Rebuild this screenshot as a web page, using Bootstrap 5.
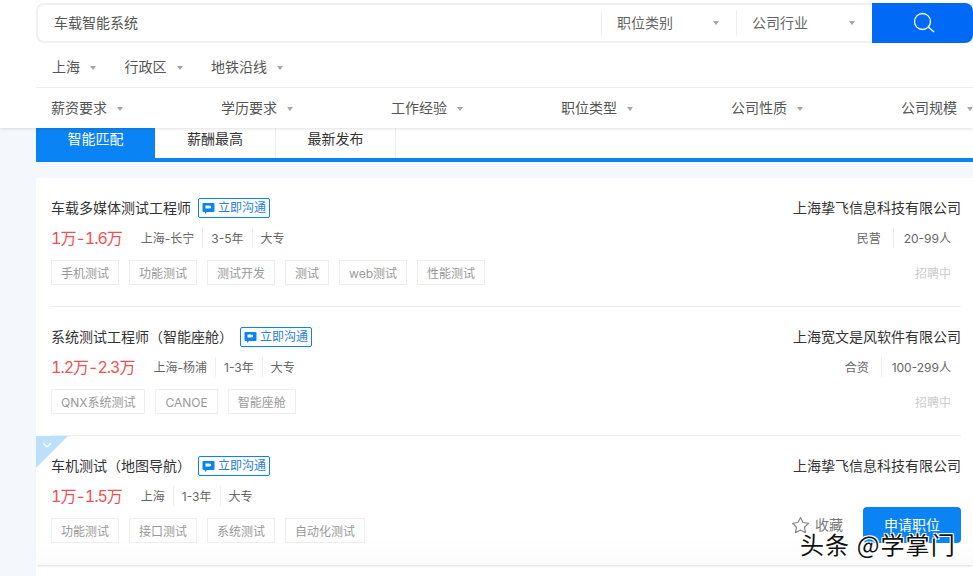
<!DOCTYPE html>
<html lang="zh">
<head>
<meta charset="utf-8">
<title>职位搜索</title>
<link href="https://cdn.jsdelivr.net/npm/bootstrap@5.3.3/dist/css/bootstrap.min.css" rel="stylesheet">
<style>
html, body { height: 576px; overflow: hidden; }
body { background: #f4f7fb; font-family: Inter, "Noto Sans CJK SC", "Liberation Sans", sans-serif; font-size: 14px; color: #333; position: relative; }
.top-head { height: 128px; background: #fff; padding-top: 3px; padding-left: 36px; box-shadow: 0 1px 3px rgba(0,0,0,.12); position: relative; z-index: 2; overflow: hidden; }
.search-box { height: 40px; border: 2px solid #f0f0f0; border-right: 0; border-radius: 8px; color: #555; }
.search-txt { padding-left: 16px; margin-top: -2px; }
.search-sel { width: 135px; height: 26px; padding: 0 17px 0 15px; border-left: 1px solid #f0f0f0; color: #666; }
.search-sel + .search-sel { width: 136px; }
.search-sel span { margin-top: -2px; }
.search-btn { width: 101px; height: 40px; margin: -2px 0; background: #0069f5; border: 0; border-radius: 0 8px 8px 0; }
.tri { display: inline-block; width: 0; height: 0; border: 3px solid transparent; border-top: 4px solid #a5a5a5; border-bottom: 0; vertical-align: middle; }
.area-row { height: 44px; padding: 2px 0 0 16px; gap: 28.5px; color: #555; }
.area-row .tri { margin-left: 10px; }
.cond-row { height: 41px; border-top: 1px solid #eee; padding: 0 0 2px 15px; color: #555; }
.cond-item { width: 170px; flex: none; }
.cond-item .tri { margin-left: 10px; }
.sort-bar { height: 34px; margin-left: 36px; background: #fff; border-bottom: 4px solid #0a84f5; }
.sort-tab { width: 120px; border-right: 1px solid #eee; text-align: center; line-height: 21px; color: #333; }
.sort-tab.on { width: 119px; background: #0a84f5; color: #fff; border-right: 0; }
.sort-tab.on + .sort-tab { width: 121px; }
.job-list { margin: 16px 0 0 36px; background: #fff; height: 400px; }
.job-row { height: 129px; padding: 20px 12px 0 15px; position: relative; }
.job-line { position: absolute; left: 15px; right: 12px; bottom: 0; border-bottom: 1px solid #eee; }
.job-row.hov { background: linear-gradient(#fff 80%, #fbfbfb); box-shadow: 0 2px 2px -1px rgba(0,0,0,.14); }
.job-name { height: 20px; line-height: 20px; }
.chat-tag { margin-left: 7px; width: 72px; height: 20px; border: 1px solid #0a84f5; border-radius: 2px; color: #2a80d8; font-size: 12px; gap: 3px; }
.job-meta { height: 20px; margin-top: 10px; font-size: 12px; color: #666; }
.pay { font-size: 16px; color: #ef4f53; margin-right: 11px; font-feature-settings: "tnum"; letter-spacing: -1px; }
.meta-cell { padding: 0 8px; height: 20px; line-height: 22px; border-right: 1px solid #eee; }
.meta-cell:last-child { border-right: 0; }
.skill-row { margin-top: 12px; gap: 10px; }
.skill { height: 25px; padding: 0 9px; border: 1px solid #eee; font-size: 12px; line-height: 25px; color: #999; }
.com-name { height: 20px; line-height: 20px; color: #333; }
.com-meta { height: 20px; margin-top: 10px; font-size: 12px; color: #666; padding-right: 2px; }
.com-meta .meta-cell { padding: 0 12px 0 10px; }
.com-meta .meta-cell:last-child { padding-right: 8px; }
.hire-state { margin-top: 16px; padding-right: 10px; font-size: 12px; line-height: 20px; color: #ccc; }
.job-act { margin-top: 31px; }
.save-lnk { font-size: 14px; color: #777; margin-right: 20px; gap: 5px; }
.save-lnk span { margin-top: -2px; }
.apply-btn { width: 98px; height: 36px; background: #0a84f5; color: #fff; font-size: 14px; border: 0; border-radius: 4px; padding: 0 0 2px; }
.corner-mark { position: absolute; left: 0; top: 0; }
.water-mark { position: absolute; left: 800px; top: 528px; font-family: "Noto Sans CJK SC", sans-serif; font-size: 24px; line-height: 32px; color: #111; letter-spacing: 1.1px; text-shadow: 1px 1px 0 #fff, -1px -1px 0 #fff, 1px -1px 0 #fff, -1px 1px 0 #fff; z-index: 3; white-space: nowrap; }
</style>
</head>
<body>

<header class="top-head">
  <div class="search-box d-flex align-items-center">
    <div class="search-txt flex-grow-1">车载智能系统</div>
    <div class="search-sel d-flex align-items-center justify-content-between"><span>职位类别</span><i class="tri"></i></div>
    <div class="search-sel d-flex align-items-center justify-content-between"><span>公司行业</span><i class="tri"></i></div>
    <button class="search-btn d-flex align-items-center justify-content-center" type="button" aria-label="搜索">
      <svg width="24" height="24" viewBox="0 0 24 24" fill="none" stroke="#fff" stroke-width="1.3"><circle cx="11.5" cy="10.5" r="8"/><path d="M17.3 16l5.700 5"/></svg>
    </button>
  </div>
  <div class="area-row d-flex align-items-center">
    <div>上海<i class="tri"></i></div>
    <div>行政区<i class="tri"></i></div>
    <div>地铁沿线<i class="tri"></i></div>
  </div>
  <div class="cond-row d-flex align-items-center">
    <div class="cond-item">薪资要求<i class="tri"></i></div>
    <div class="cond-item">学历要求<i class="tri"></i></div>
    <div class="cond-item">工作经验<i class="tri"></i></div>
    <div class="cond-item">职位类型<i class="tri"></i></div>
    <div class="cond-item">公司性质<i class="tri"></i></div>
    <div class="cond-item">公司规模<i class="tri"></i></div>
  </div>
</header>

<div class="sort-bar d-flex">
  <div class="sort-tab on">智能匹配</div>
  <div class="sort-tab">薪酬最高</div>
  <div class="sort-tab">最新发布</div>
</div>

<div class="job-list">

  <div class="job-row d-flex justify-content-between">
    <div>
      <div class="job-name d-flex">车载多媒体测试工程师
        <span class="chat-tag d-flex align-items-center justify-content-center">
          <svg width="13" height="12" viewBox="0 0 13 12"><path fill="#0a84f5" d="M1.500 1h10a1 1 0 0 1 1 1v7a1 1 0 0 1-1 1H5l-2 2v-2H1.500a1 1 0 0 1-1-1V2a1 1 0 0 1 1-1z"/><path fill="#fff" d="M3.500 3.500h4v1l1.500-1v3l-1.500-1v1h-4z"/></svg>立即沟通</span>
      </div>
      <div class="job-meta d-flex align-items-center">
        <span class="pay">1万-1.6万</span>
        <span class="meta-cell">上海-长宁</span><span class="meta-cell">3-5年</span><span class="meta-cell">大专</span>
      </div>
      <div class="skill-row d-flex">
        <span class="skill">手机测试</span><span class="skill">功能测试</span><span class="skill">测试开发</span><span class="skill">测试</span><span class="skill">web测试</span><span class="skill">性能测试</span>
      </div>
    </div>
    <div class="d-flex flex-column align-items-end">
      <div class="com-name">上海挚飞信息科技有限公司</div>
      <div class="com-meta d-flex"><span class="meta-cell">民营</span><span class="meta-cell">20-99人</span></div>
      <div class="hire-state">招聘中</div>
    </div>
    <div class="job-line"></div>
  </div>

  <div class="job-row d-flex justify-content-between">
    <div>
      <div class="job-name d-flex">系统测试工程师（智能座舱）
        <span class="chat-tag d-flex align-items-center justify-content-center">
          <svg width="13" height="12" viewBox="0 0 13 12"><path fill="#0a84f5" d="M1.500 1h10a1 1 0 0 1 1 1v7a1 1 0 0 1-1 1H5l-2 2v-2H1.500a1 1 0 0 1-1-1V2a1 1 0 0 1 1-1z"/><path fill="#fff" d="M3.500 3.500h4v1l1.500-1v3l-1.500-1v1h-4z"/></svg>立即沟通</span>
      </div>
      <div class="job-meta d-flex align-items-center">
        <span class="pay">1.2万-2.3万</span>
        <span class="meta-cell">上海-杨浦</span><span class="meta-cell">1-3年</span><span class="meta-cell">大专</span>
      </div>
      <div class="skill-row d-flex">
        <span class="skill">QNX系统测试</span><span class="skill">CANOE</span><span class="skill">智能座舱</span>
      </div>
    </div>
    <div class="d-flex flex-column align-items-end">
      <div class="com-name">上海宽文是风软件有限公司</div>
      <div class="com-meta d-flex"><span class="meta-cell">合资</span><span class="meta-cell">100-299人</span></div>
      <div class="hire-state">招聘中</div>
    </div>
    <div class="job-line"></div>
  </div>

  <div class="job-row hov d-flex justify-content-between">
    <svg class="corner-mark" width="32" height="32" viewBox="0 0 32 32"><path fill="#bcdffb" d="M0 0h32L0 32z"/><path fill="none" stroke="#fff" stroke-width="1.2" d="M7 7l4 4 4-4"/></svg>
    <div>
      <div class="job-name d-flex">车机测试（地图导航）
        <span class="chat-tag d-flex align-items-center justify-content-center">
          <svg width="13" height="12" viewBox="0 0 13 12"><path fill="#0a84f5" d="M1.500 1h10a1 1 0 0 1 1 1v7a1 1 0 0 1-1 1H5l-2 2v-2H1.500a1 1 0 0 1-1-1V2a1 1 0 0 1 1-1z"/><path fill="#fff" d="M3.500 3.500h4v1l1.500-1v3l-1.500-1v1h-4z"/></svg>立即沟通</span>
      </div>
      <div class="job-meta d-flex align-items-center">
        <span class="pay">1万-1.5万</span>
        <span class="meta-cell">上海</span><span class="meta-cell">1-3年</span><span class="meta-cell">大专</span>
      </div>
      <div class="skill-row d-flex">
        <span class="skill">功能测试</span><span class="skill">接口测试</span><span class="skill">系统测试</span><span class="skill">自动化测试</span>
      </div>
    </div>
    <div class="d-flex flex-column align-items-end">
      <div class="com-name">上海挚飞信息科技有限公司</div>
      <div class="job-act d-flex align-items-center">
        <div class="save-lnk d-flex align-items-center">
          <svg width="19" height="18" viewBox="0 0 19 18" fill="none" stroke="#8a8a8a" stroke-width="1.2" stroke-linejoin="round"><path d="M9.500 1.500l2.500 5 5.500.8-4 3.900 1 5.400-5-2.600-5 2.600 1-5.400-4-3.900 5.500-.8z"/></svg><span>收藏</span></div>
        <button class="apply-btn btn" type="button">申请职位</button>
      </div>
    </div>
  </div>

</div>

<div class="water-mark">头条 @学掌门</div>

</body>
</html>
